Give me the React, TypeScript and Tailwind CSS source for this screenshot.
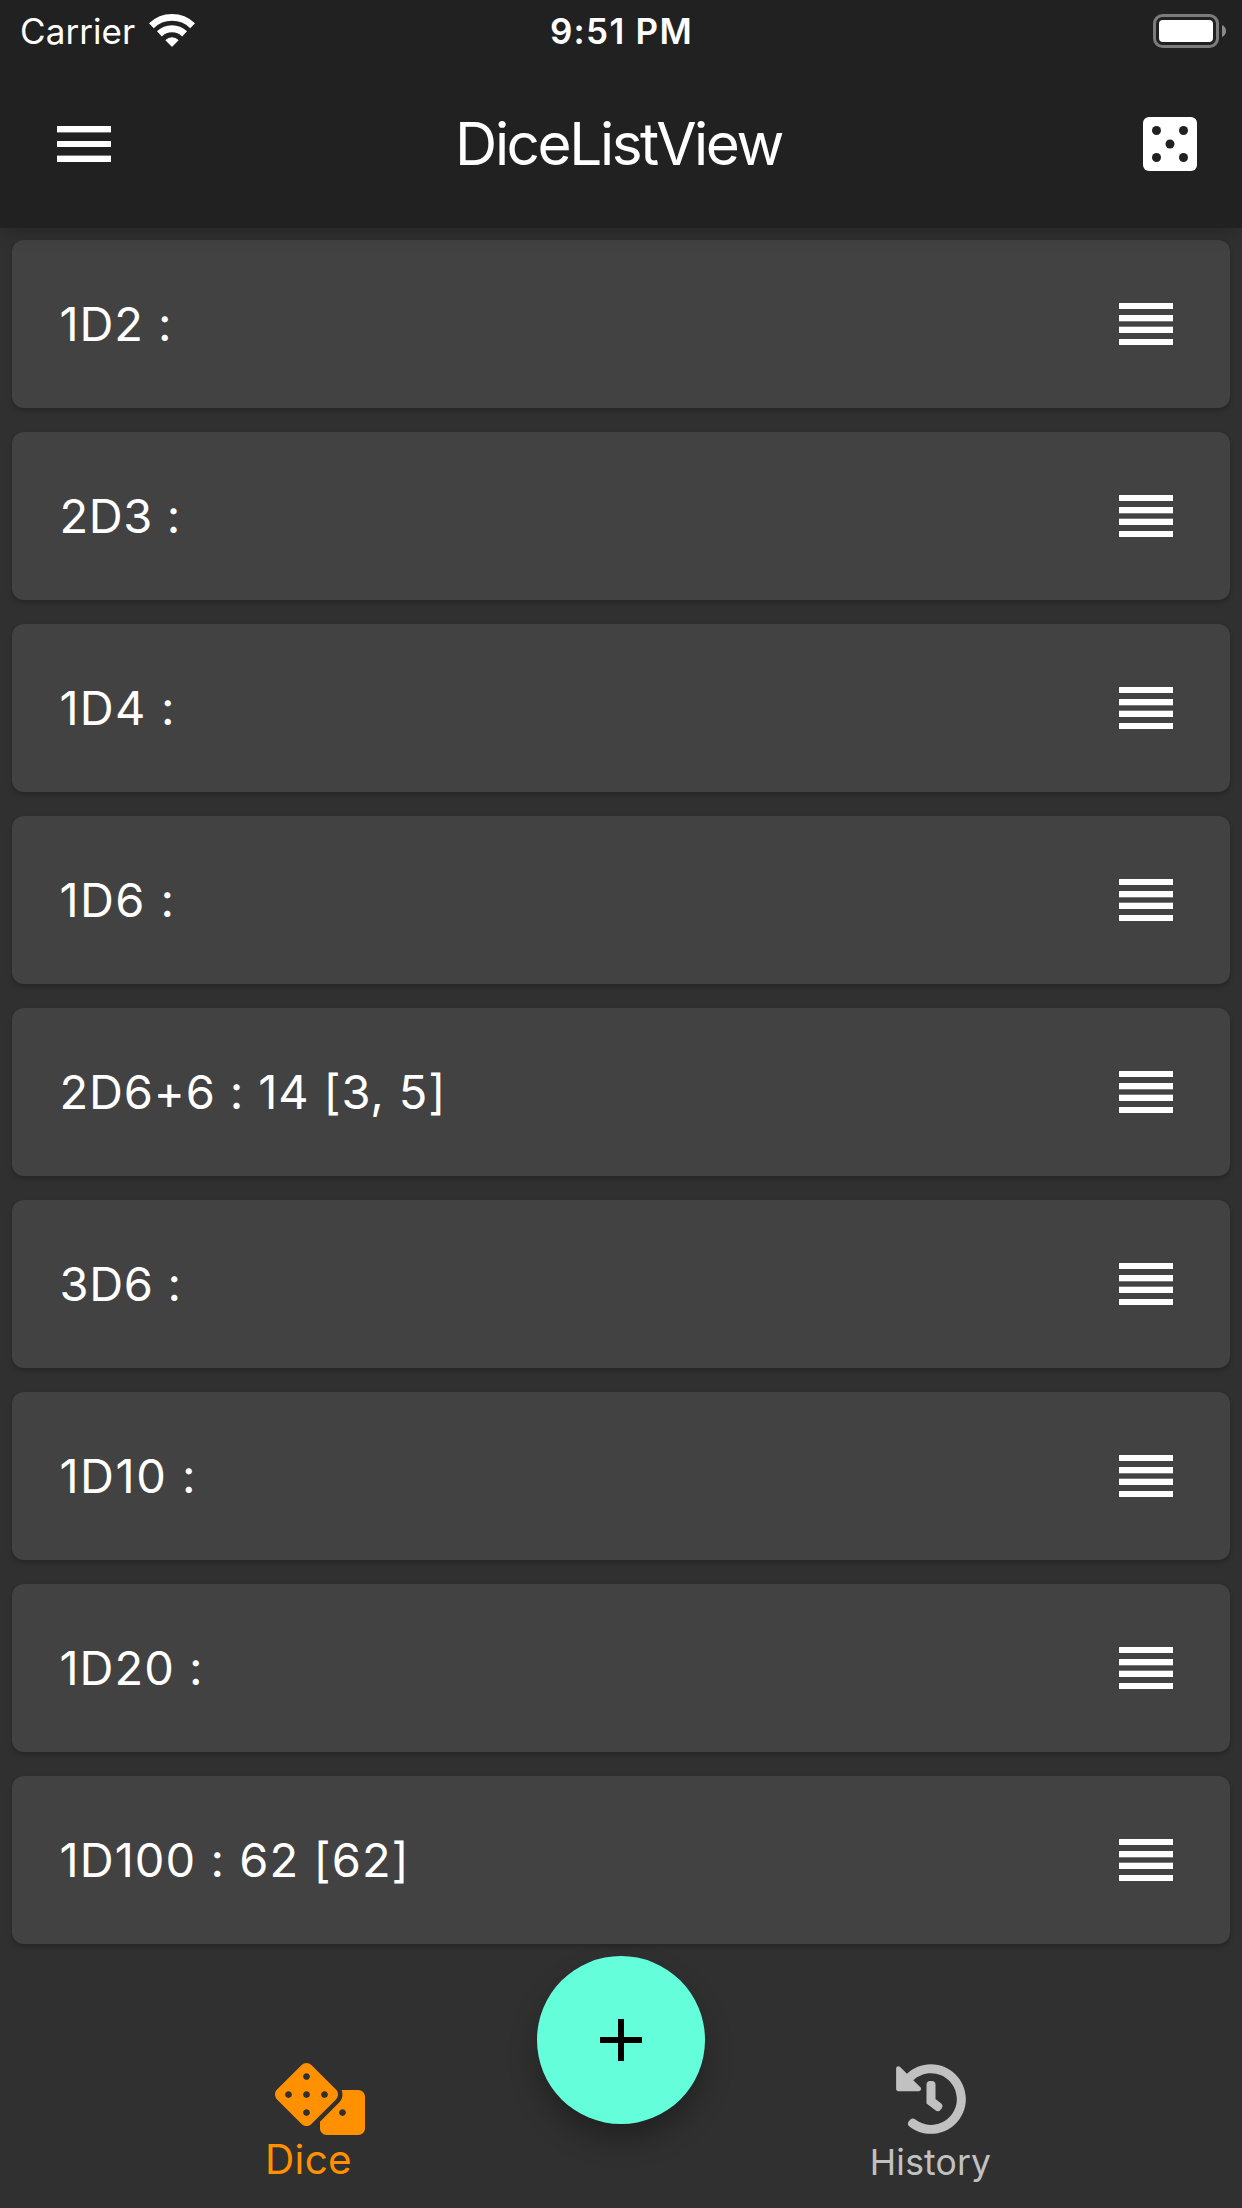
import { FaDice, FaHistory } from "react-icons/fa";

const rows = [
  { label: "1D2 :", tracking: "tracking-[0.9px]" },
  { label: "2D3 :", tracking: "tracking-[0.6px]" },
  { label: "1D4 :", tracking: "tracking-[1.2px]" },
  { label: "1D6 :", tracking: "tracking-[1.4px]" },
  { label: "2D6+6 : 14 [3, 5]", tracking: "tracking-[0.85px]" },
  { label: "3D6 :", tracking: "tracking-[0.7px]" },
  { label: "1D10 :", tracking: "tracking-[1.5px]" },
  { label: "1D20 :", tracking: "tracking-[1px]" },
  { label: "1D100 : 62 [62]", tracking: "tracking-[1.05px]" },
];

function WifiIcon() {
  return (
    <svg className="h-9 w-12" viewBox="0 0 48 36" fill="none" stroke="white">
      <path d="M3.4 12.7a29.6 29.6 0 0 1 41.2 0" strokeWidth="6.8" />
      <path d="M11.4 20.9a18.2 18.2 0 0 1 25.2 0" strokeWidth="7" />
      <path d="M24 33.4L17.9 27.2a9 9 0 0 1 12.2 0Z" fill="white" strokeWidth="1" strokeLinejoin="round" />
    </svg>
  );
}

function BatteryIcon() {
  return (
    <svg className="h-[34px] w-[73px]" viewBox="0 0 73 34">
      <rect x="1.5" y="1.5" width="63" height="31" rx="8" fill="none" stroke="#7c7c7c" strokeWidth="3" />
      <rect x="6" y="6" width="54" height="22" rx="4" fill="white" />
      <path d="M69 11c2.600 1 4 3.400 4 6s-1.400 5-4 6z" fill="#8a8a8a" />
    </svg>
  );
}

function MenuIcon() {
  return (
    <svg className="h-9 w-[54px]" viewBox="0 0 54 36" fill="white">
      <rect width="54" height="6.400" />
      <rect y="15" width="54" height="6" />
      <rect y="29.600" width="54" height="6.400" />
    </svg>
  );
}

function DieIcon() {
  return (
    <svg className="size-[54px]" viewBox="0 0 54 54">
      <rect width="54" height="54" rx="6" fill="white" />
      <g fill="#212121">
        <circle cx="13.500" cy="13.500" r="4.500" />
        <circle cx="40.500" cy="13.500" r="4.500" />
        <circle cx="27" cy="27" r="4.500" />
        <circle cx="13.500" cy="40.500" r="4.500" />
        <circle cx="40.500" cy="40.500" r="4.500" />
      </g>
    </svg>
  );
}

function ReorderIcon() {
  return (
    <svg className="h-[42px] w-[54px]" viewBox="0 0 54 42" fill="white">
      <rect width="54" height="6" />
      <rect y="12" width="54" height="6.300" />
      <rect y="23.700" width="54" height="6.300" />
      <rect y="36" width="54" height="6" />
    </svg>
  );
}

function DiceRow({ label, tracking }: { label: string; tracking: string }) {
  return (
    <li className="flex h-[168px] items-center justify-between rounded-xl bg-[#424242] pr-[57px] pl-[47.5px] shadow-[0_3px_5px_0_rgba(0,0,0,0.22)]">
      <span className={`text-[47px] leading-[60px] whitespace-pre ${tracking}`}>{label}</span>
      <ReorderIcon />
    </li>
  );
}

export default function App() {
  return (
    <div className="flex h-[2208px] w-[1242px] flex-col overflow-hidden bg-[#303030] font-['Inter',sans-serif] text-white">
      <header className="relative z-10 h-[228px] shrink-0 bg-[#212121] shadow-[0_6px_18px_-3px_rgba(0,0,0,0.22)]">
        <div className="grid h-[60px] grid-cols-3 items-center pr-4 pl-5">
          <div className="flex items-center gap-[13px]">
            <span className="pt-px text-[35px] leading-[60px] tracking-[0.080px]">Carrier</span>
            <WifiIcon />
          </div>
          <span className="mr-[3px] text-center text-[35px] leading-[60px] font-[560] tracking-[1.300px] whitespace-nowrap">9:51 PM</span>
          <div className="flex justify-end">
            <BatteryIcon />
          </div>
        </div>
        <div className="flex h-[168px] items-center justify-between pr-[45px] pl-[57px]">
          <MenuIcon />
          <h1 className="mr-[17px] text-[58.5px] leading-[72px] tracking-[-2.440px]">DiceListView</h1>
          <DieIcon />
        </div>
      </header>

      <ul className="flex flex-col gap-6 px-3 pt-3">
        {rows.map((row) => (
          <DiceRow key={row.label} label={row.label} tracking={row.tracking} />
        ))}
      </ul>

      <nav className="mt-auto grid h-[168px] shrink-0 grid-cols-[1fr_168px_1fr] bg-[#303030]">
        <button className="flex flex-col items-center pt-[23px] pl-[84px] text-[#ff9100]">
          <span className="flex size-[72px] shrink-0">
            <FaDice className="h-[72px] w-[90px] shrink-0" />
          </span>
          <span className="mr-[4px] text-[40.5px] leading-[50px] tracking-[0.280px]">Dice</span>
        </button>
        <button
          aria-label="Add dice"
          className="-mt-[84px] flex size-[168px] items-center justify-center rounded-full bg-[#64ffda] shadow-[0_16px_30px_-2px_rgba(0,0,0,0.32)]"
        >
          <svg className="size-[42px]" viewBox="0 0 42 42" fill="black">
            <path d="M18 0h6v18h18v6H24v18h-6V24H0v-6h18z" />
          </svg>
        </button>
        <button className="flex flex-col items-center pt-[23px] pr-[85px] text-[#c1c1c1]">
          <FaHistory className="size-[72px] shrink-0" />
          <span className="mr-px text-[35.5px] leading-[56px] tracking-[0.180px]">History</span>
        </button>
      </nav>
    </div>
  );
}
